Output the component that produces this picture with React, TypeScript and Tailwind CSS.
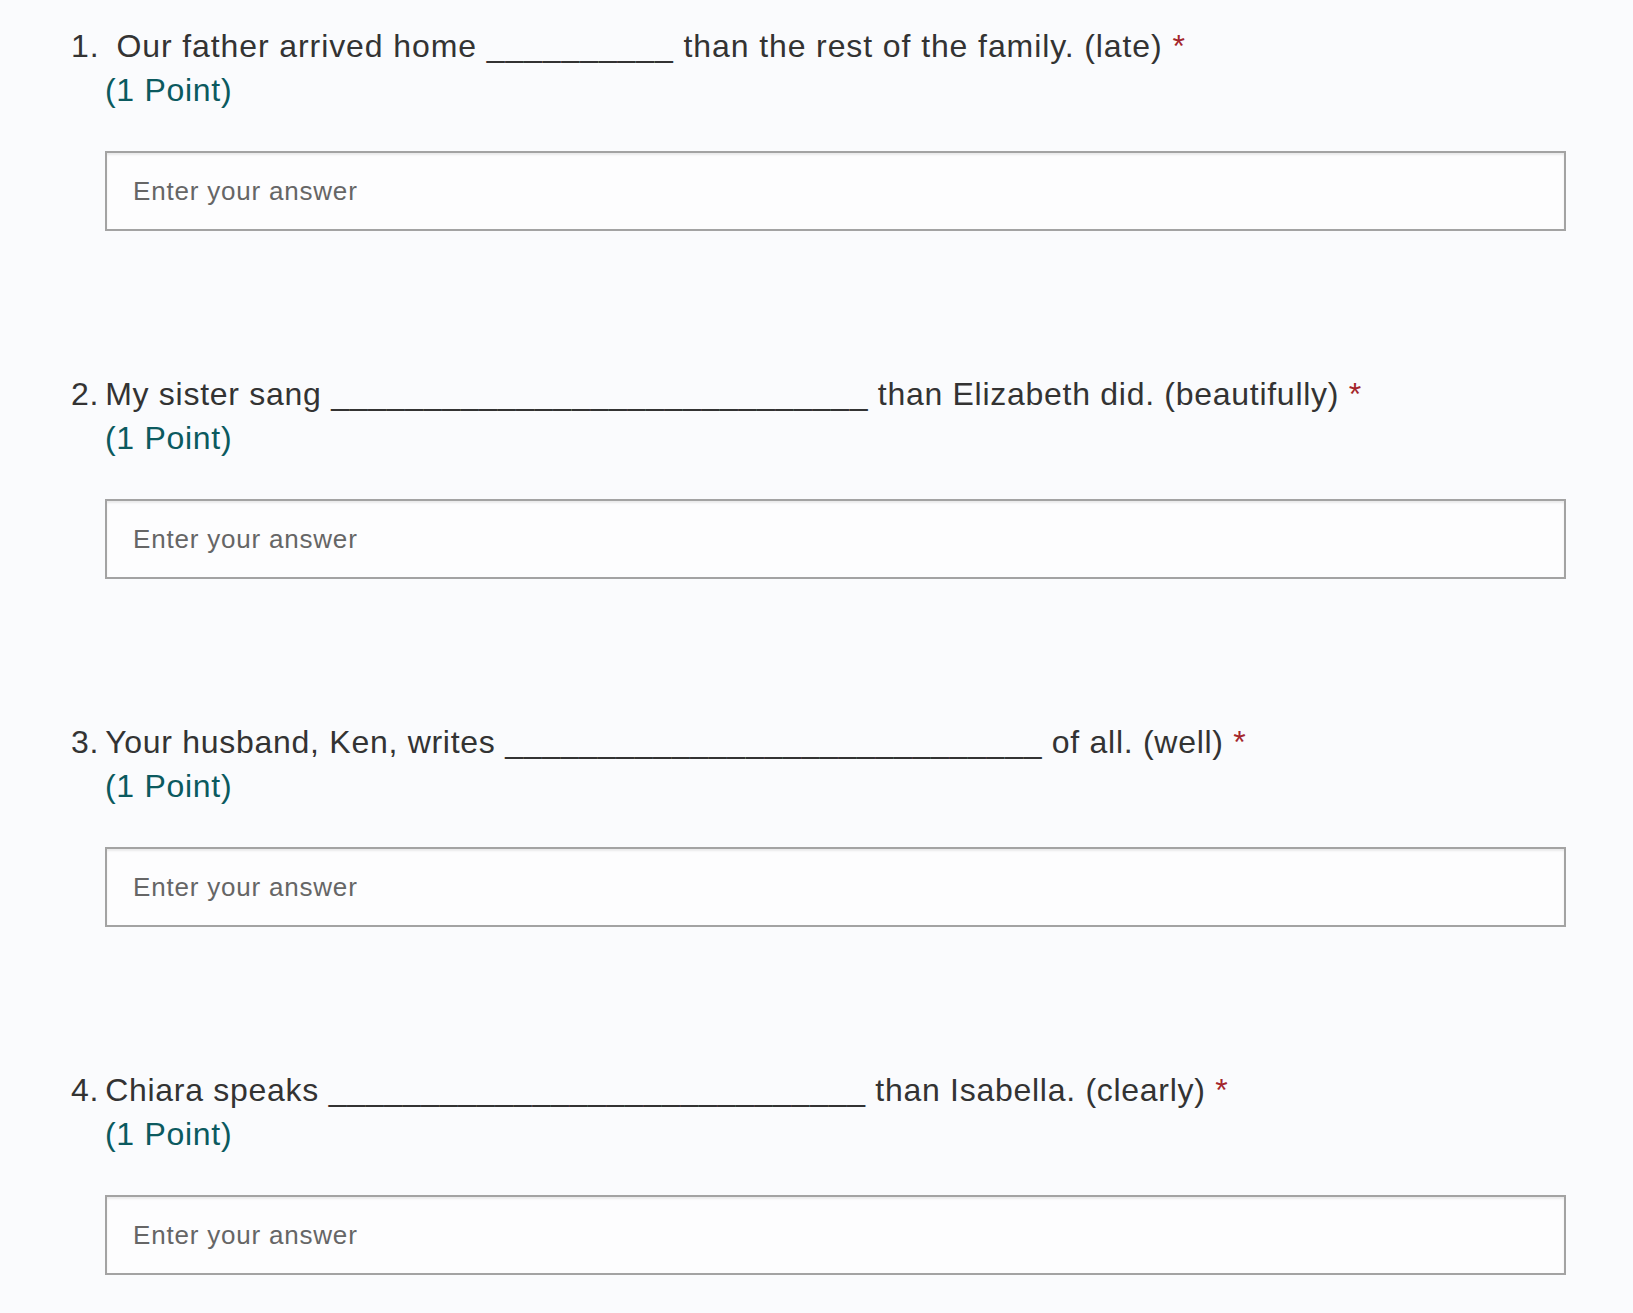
import React from "react";

interface Question {
  num: number;
  gap: string;
  track: string;
  before: string;
  blanks: number;
  after: string;
}

const questions: Question[] = [
  { num: 1, gap: "ml-[17px]", track: "tracking-[0.9px]", before: "Our father arrived home", blanks: 10, after: "than the rest of the family. (late)" },
  { num: 2, gap: "ml-[6px]", track: "tracking-[0.72px]", before: "My sister sang", blanks: 29, after: "than Elizabeth did. (beautifully)" },
  { num: 3, gap: "ml-[6px]", track: "tracking-[0.72px]", before: "Your husband, Ken, writes", blanks: 29, after: "of all. (well)" },
  { num: 4, gap: "ml-[6px]", track: "tracking-[0.72px]", before: "Chiara speaks", blanks: 29, after: "than Isabella. (clearly)" },
];

function QuestionBlock({ q }: { q: Question }) {
  return (
    <div className="mb-[141px]">
      <div className={`text-[32px] leading-[44px] ${q.track} text-[#333333] whitespace-nowrap`}>
        <span>{q.num}.</span>
        <span className={q.gap}>
          {q.before} {"_".repeat(q.blanks)} {q.after}{" "}
          <span className="text-[#a4262c]">*</span>
        </span>
      </div>
      <div className="ml-[34px] text-[32px] leading-[44px] tracking-[0.7px] text-[#0b5a5f]">
        (1 Point)
      </div>
      <div className="ml-[34px] mt-[39px]">
        <input
          type="text"
          placeholder="Enter your answer"
          className="w-full h-[80px] border-2 border-[#a3a3a3] bg-[#fdfdfe] px-[26px] text-[26px] tracking-[0.8px] text-[#333333] placeholder:text-[#666666] shadow-[inset_0_2px_2px_rgba(0,0,0,0.08)] outline-none"
          style={{ fontFamily: "inherit" }}
        />
      </div>
    </div>
  );
}

export default function App() {
  return (
    <div
      className="min-h-[1313px] bg-[#fafbfd] pl-[71px] pr-[67px] pt-[24px]"
      style={{ fontFamily: '"Liberation Sans", Arial, Helvetica, sans-serif' }}
    >
      {questions.map((q) => (
        <QuestionBlock key={q.num} q={q} />
      ))}
    </div>
  );
}
